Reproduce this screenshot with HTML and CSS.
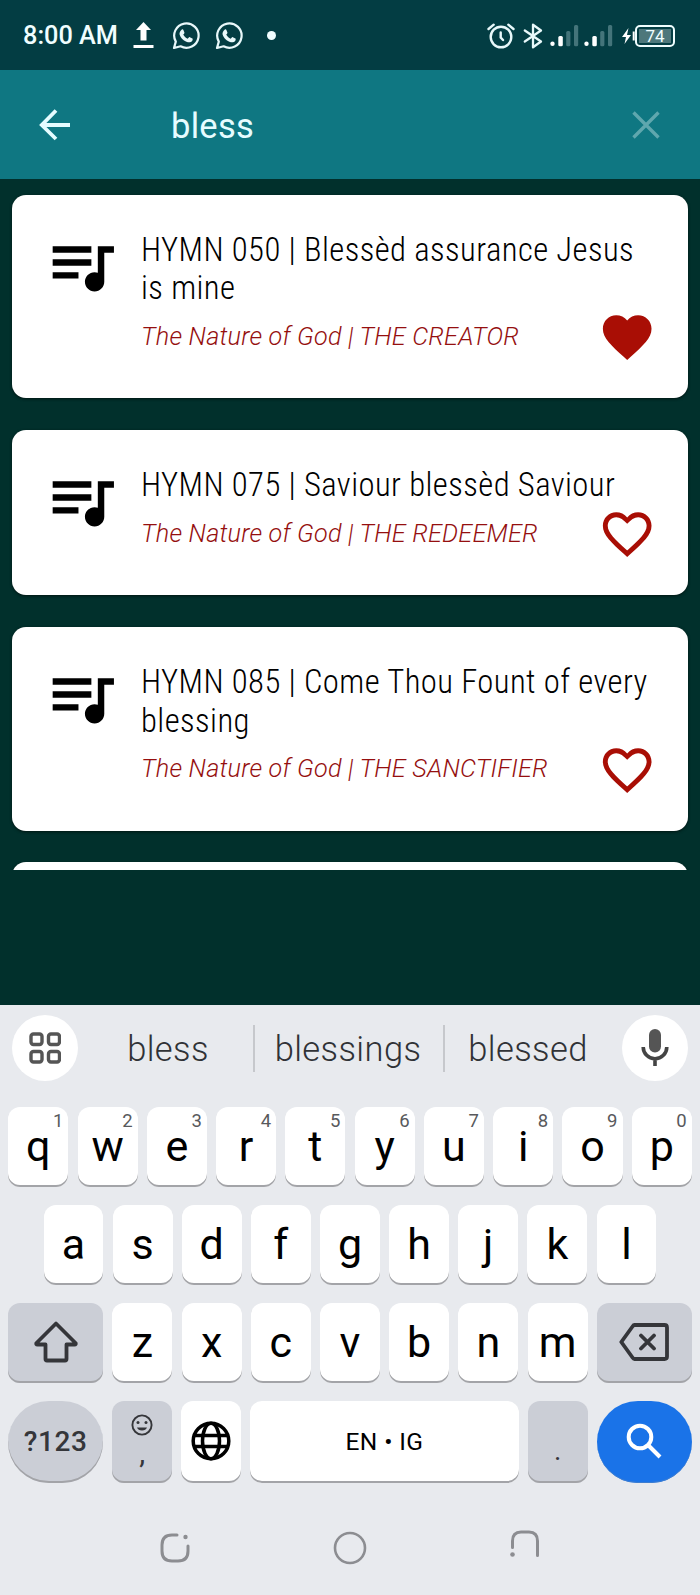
FILE: index.html
```
<!DOCTYPE html>
<html lang="en">
<head>
    <meta charset="utf-8">
    <title>Hymn Search</title>
    <link rel="stylesheet" href="styles.css">
</head>
<body>
    <!-- shared icons -->
    <svg class="defs">
        <symbol id="queue" viewBox="0 0 24 24"><path d="M15 6H3v2h12V6zm0 4H3v2h12v-2zM3 16h8v-2H3v2zM17 6v8.18c-.31-.11-.65-.18-1-.18-1.66 0-3 1.34-3 3s1.34 3 3 3 3-1.34 3-3V8h3V6h-5z"/></symbol>
        <symbol id="heart" viewBox="0 0 24 24"><path d="M12 21.35l-1.45-1.32C5.4 15.36 2 12.28 2 8.5 2 5.42 4.42 3 7.5 3c1.74 0 3.41.81 4.5 2.09C13.09 3.81 14.76 3 16.5 3 19.58 3 22 5.42 22 8.5c0 3.78-3.4 6.86-8.55 11.54L12 21.35z"/></symbol>
        <symbol id="heart-border" viewBox="0 0 24 24"><path d="M16.5 3c-1.74 0-3.41.81-4.5 2.09C10.91 3.81 9.24 3 7.5 3 4.42 3 2 5.42 2 8.5c0 3.78 3.4 6.86 8.55 11.54L12 21.35l1.45-1.32C18.6 15.36 22 12.28 22 8.5 22 5.42 19.58 3 16.5 3zm-4.4 15.55l-.1.1-.1-.1C7.14 14.24 4 11.39 4 8.5 4 6.5 5.5 5 7.5 5c1.54 0 3.04 1.14 4.5 2.7 1.46-1.56 2.96-2.7 4.5-2.7 2 0 3.5 1.5 3.5 3.5 0 2.89-3.14 5.74-7.9 10.05z"/></symbol>
        <symbol id="whatsapp" viewBox="0 0 28 28">
            <path d="M2 26l1.8-6.4A12.2 12.2 0 1 1 8.6 24.3z" fill="none" stroke="#e8f8fa" stroke-width="2.2" stroke-linejoin="round"/>
            <path d="M9.6 7.7c.6-.5 1.5-.5 1.8.2l1 2.5c.2.5 0 .9-1.2 2.2 1 2 2.4 3.3 4.5 4.2 1.3-1.5 1.6-1.9 2.1-1.6l2.6 1.3c.5.3.4 1.3-.1 2.2-.8 1.3-2.9 1.9-4.4 1.5-4.2-1.1-7.3-4-8.3-7.7-.4-1.8.6-3.6 2-4.8z" fill="#e8f8fa"/>
        </symbol>
        <symbol id="signal" viewBox="0 0 29 22">
            <circle cx="2.5" cy="18.8" r="2.2" fill="#fff"/>
            <rect x="8.3" y="11" width="4.5" height="10.2" rx="1.5" fill="#fff"/>
            <rect x="16.2" y="6" width="4.2" height="15.2" rx="1.5" fill="#44747a"/>
            <rect x="24" y="0" width="4.2" height="21.2" rx="1.5" fill="#44747a"/>
        </symbol>
    </svg>

    <div class="status-bar">
        <span class="time">8:00 AM</span>
        <svg class="upload" width="21" height="27" viewBox="0 0 21 27" fill="#fff"><path d="M10.5 0l7.5 8h-4.5v10.5h-6V8H3zM.5 23h20v3H.5z"/></svg>
        <svg class="chat" width="28" height="28"><use href="#whatsapp"/></svg>
        <svg class="chat" width="28" height="28"><use href="#whatsapp"/></svg>
        <span class="dot"></span>
        <div class="status-right">
            <svg width="28" height="26" viewBox="0 0 28 26" fill="none" stroke="#e8f8fa" stroke-width="2.4" stroke-linecap="round"><circle cx="14" cy="14" r="10.3"/><path d="M1.5 6l5.2-4.3M26.5 6l-5.2-4.3M13.7 9.5v5l2.3 2.5"/></svg>
            <svg class="bluetooth" width="20" height="26" viewBox="0 0 20 26" fill="none" stroke="#e8f8fa" stroke-width="2.3" stroke-linejoin="round" stroke-linecap="round"><path d="M1.8 7.5L18 18.5 10 24.3V1.7L18 7.5 1.8 18.5"/></svg>
            <svg class="signal" width="29" height="22"><use href="#signal"/></svg>
            <svg class="signal second" width="29" height="22"><use href="#signal"/></svg>
            <svg class="bolt" width="14" height="18" viewBox="0 0 14 18"><path d="M7.5 1L1 10h4L3.5 17 10 8H6z" fill="#fff"/><path d="M12.7 4.5v9" stroke="#fff" stroke-width="2"/></svg>
            <span class="battery"><span>74</span></span>
        </div>
    </div>

    <div class="toolbar">
        <svg class="back" width="32" height="32" viewBox="0 0 32 32" fill="none" stroke="#e6fcff" stroke-width="3.8"><path d="M31 16H3M17 1.5L2.8 16 17 30"/></svg>
        <span class="query">bless</span>
        <svg class="clear" width="28" height="28" viewBox="0 0 28 28" fill="none" stroke="#5fa7ae" stroke-width="3.4"><path d="M1.5 1.5l25 25M26.5 1.5l-25 25"/></svg>
    </div>

    <div class="results">
        <div class="card">
            <svg class="note"><use href="#queue"/></svg>
            <div class="info">
                <div class="title">HYMN 050 | Blessèd assurance Jesus<br>is mine</div>
                <div class="category">The Nature of God | THE CREATOR</div>
            </div>
            <svg class="fav"><use href="#heart"/></svg>
        </div>
        <div class="card">
            <svg class="note"><use href="#queue"/></svg>
            <div class="info">
                <div class="title">HYMN 075 | Saviour blessèd Saviour</div>
                <div class="category">The Nature of God | THE REDEEMER</div>
            </div>
            <svg class="fav"><use href="#heart-border"/></svg>
        </div>
        <div class="card">
            <svg class="note"><use href="#queue"/></svg>
            <div class="info">
                <div class="title">HYMN 085 | Come Thou Fount of every<br>blessing</div>
                <div class="category">The Nature of God | THE SANCTIFIER</div>
            </div>
            <svg class="fav"><use href="#heart-border"/></svg>
        </div>
        <div class="card"></div>
    </div>

    <div class="keyboard">
        <div class="suggestions">
            <span class="round"><svg width="32" height="32" viewBox="0 0 32 32" fill="none" stroke="#555" stroke-width="3.4"><rect x="2" y="2" width="11" height="10.5" rx="2.5"/><rect x="19.5" y="2" width="11" height="10.5" rx="2.5"/><rect x="2" y="19.5" width="11" height="10.5" rx="2.5"/><rect x="19.5" y="19.5" width="11" height="10.5" rx="2.5"/></svg></span>
            <span class="word first">bless</span>
            <span class="word middle">blessings</span>
            <span class="word last">blessed</span>
            <span class="round"><svg width="28" height="38" viewBox="0 0 28 38"><rect x="8" y="0" width="12" height="23.5" rx="6" fill="#555"/><path d="M2.2 18a11.8 11.8 0 0 0 23.6 0M14 30v7" fill="none" stroke="#444" stroke-width="3.6"/></svg></span>
        </div>

        <div class="row">
            <span class="key">q<sup>1</sup></span>
            <span class="key">w<sup>2</sup></span>
            <span class="key">e<sup>3</sup></span>
            <span class="key">r<sup>4</sup></span>
            <span class="key">t<sup>5</sup></span>
            <span class="key">y<sup>6</sup></span>
            <span class="key">u<sup>7</sup></span>
            <span class="key">i<sup>8</sup></span>
            <span class="key">o<sup>9</sup></span>
            <span class="key">p<sup>0</sup></span>
        </div>
        <div class="row indent">
            <span class="key">a</span>
            <span class="key">s</span>
            <span class="key">d</span>
            <span class="key">f</span>
            <span class="key">g</span>
            <span class="key">h</span>
            <span class="key">j</span>
            <span class="key">k</span>
            <span class="key">l</span>
        </div>
        <div class="row">
            <span class="key gray wide"><svg width="44" height="42" viewBox="0 0 44 42" fill="none" stroke="#35363a" stroke-width="3.8" stroke-linejoin="round"><path d="M22 2.5L2.5 22q-.8 1.5 1 1.5h8V38q0 1.5 1.5 1.5h18q1.5 0 1.5-1.5V23.5h8q1.8 0 1-1.5z"/></svg></span>
            <span class="key">z</span>
            <span class="key">x</span>
            <span class="key">c</span>
            <span class="key">v</span>
            <span class="key">b</span>
            <span class="key">n</span>
            <span class="key">m</span>
            <span class="key gray wide"><svg width="50" height="38" viewBox="0 0 50 38" fill="none" stroke="#35363a" stroke-width="3.8" stroke-linejoin="round" stroke-linecap="round"><path d="M15.5 2h30q2.5 0 2.5 2.5v29q0 2.500-2.500 2.500h-30q-1 0-2-1.500L2.300 19 13.500 3.500q1-1.500 2-1.500zM22 12.500l13 13M35 12.500l-13 13"/></svg></span>
        </div>
        <div class="row bottom">
            <span class="key gray wide oval symbols">?123</span>
            <span class="key gray comma">
                <svg width="22" height="22" viewBox="0 0 22 22" fill="none" stroke="#35363a" stroke-width="1.9"><circle cx="11" cy="11" r="9.6"/><path d="M6 13.500h10a5.200 4 0 0 1-10 0z" fill="#35363a" stroke="none"/><circle cx="7" cy="8.5" r="1.5" fill="#35363a" stroke="none"/><circle cx="15" cy="8.5" r="1.5" fill="#35363a" stroke="none"/></svg>
                <span>,</span>
            </span>
            <span class="key"><svg width="40" height="40" viewBox="0 0 40 40" fill="none" stroke="#000" stroke-width="3.5"><circle cx="20" cy="20" r="17.8"/><ellipse cx="20" cy="20" rx="8.5" ry="17.8"/><path d="M4 14.5h32M4 25.5h32"/></svg></span>
            <span class="key space">EN • IG</span>
            <span class="key gray period">.</span>
            <span class="key wide oval search"><svg width="36" height="36" viewBox="0 0 36 36" fill="none" stroke="#fff" stroke-width="4"><circle cx="14" cy="14" r="11.3"/><path d="M22 22l12 12"/></svg></span>
        </div>

        <div class="nav">
            <svg width="32" height="32" viewBox="0 0 32 32" fill="none" stroke="#8c8d91" stroke-width="3" stroke-linecap="round"><path d="M18 3h-5Q3 3 3 13v6q0 10 10 10h6q10 0 10-10v-5"/><circle cx="26.5" cy="5" r="2.2" fill="#8c8d91" stroke="none"/></svg>
            <svg width="34" height="34" viewBox="0 0 34 34" fill="none" stroke="#8c8d91" stroke-width="2.6"><circle cx="17" cy="17" r="15"/></svg>
            <svg class="recent" width="32" height="30" viewBox="0 0 32 30" fill="none" stroke="#8c8d91" stroke-width="3" stroke-linecap="round"><path d="M3.5 18.5V12Q3.5 3 12 3h8q8.5 0 8.5 9v14.5"/><circle cx="3.5" cy="25.5" r="2.3" fill="#8c8d91" stroke="none"/></svg>
        </div>
    </div>
</body>
</html>
```
FILE: styles.css
```
* {
    box-sizing: border-box;
}
body {
    margin: 0;
    width: 700px;
    height: 1595px;
    overflow: hidden;
    display: flex;
    flex-direction: column;
    font-family: Roboto, sans-serif;
    background-color: #01302c;
}
svg {
    display: block;
    flex: none;
}
.defs {
    width: 0;
    height: 0;
    position: absolute;
}
.status-bar {
    flex: none;
    height: 70px;
    padding: 1px 25px 0 23px;
    display: flex;
    align-items: center;
    background-color: #033d43;
    color: #f0feff;
}
.time {
    width: 110px;
    font-size: 25.3px;
    font-weight: 500;
    white-space: nowrap;
}
.chat {
    margin-left: 15px;
}
.upload + .chat {
    margin-left: 18px;
}
.dot {
    width: 9px;
    height: 9px;
    margin-left: 24px;
    border-radius: 50%;
    background-color: #f0feff;
}
.status-right {
    margin-left: auto;
    display: flex;
    align-items: center;
}
.bluetooth {
    margin-left: 8px;
}
.signal {
    margin-left: 7px;
}
.signal.second {
    margin-left: 5px;
}
.bolt {
    margin-left: 8px;
}
.battery {
    width: 40px;
    height: 22px;
    padding: 2px;
    border: 2px solid #f0feff;
    border-radius: 5px;
}
.battery span {
    display: block;
    height: 14px;
    background-color: #4d777b;
    font-size: 17px;
    line-height: 15px;
    text-align: center;
}
.toolbar {
    flex: none;
    height: 109px;
    padding: 2px 40px 0 39px;
    display: flex;
    align-items: center;
    background-color: #0f7782;
}
.toolbar svg {
    margin-bottom: 1px;
}
.query {
    flex: 1;
    padding-left: 100px;
    font-size: 34.5px;
    letter-spacing: 0.3px;
    color: #e6fcff;
}
.results {
    flex: none;
    height: 691px;
    padding: 15.7px 12px 0;
    display: flex;
    flex-direction: column;
    gap: 31.8px;
    overflow: hidden;
}
.card {
    flex: none;
    min-height: 165px;
    display: grid;
    grid-template-columns: 98px 1fr;
    padding: 0 31.5px 0 31px;
    border-radius: 14px;
    background-color: #fff;
    box-shadow: 0 1px 3px #001512;
}
.note {
    width: 77.4px;
    height: 77.4px;
    margin-top: 32px;
}
.info {
    grid-area: 1 / 2;
    padding: 36.3px 0 46.7px;
}
.title {
    font-family: "Roboto Condensed", Roboto, sans-serif;
    font-stretch: 75%;
    font-weight: 360;
    font-size: 32.7px;
    line-height: 38.4px;
    letter-spacing: 0.42px;
    white-space: nowrap;
    color: #000;
}
.category {
    margin-top: 15px;
    font-size: 25.2px;
    font-style: italic;
    font-weight: 350;
    line-height: 28.8px;
    letter-spacing: 0.22px;
    white-space: nowrap;
    color: #950f0f;
}
.fav {
    grid-area: 1 / 2;
    align-self: end;
    justify-self: end;
    width: 58.4px;
    height: 58.4px;
    margin-bottom: 31.5px;
    fill: #a90e05;
}
.keyboard {
    margin-top: 135px;
    flex: 1;
    padding-top: 10px;
    background-color: #e8eaee;
}
.suggestions {
    height: 66px;
    margin: 0 12px 26px;
    display: flex;
    align-items: center;
}
.round {
    width: 66px;
    height: 66px;
    border-radius: 50%;
    display: flex;
    align-items: center;
    justify-content: center;
    background-color: #fff;
}
.word {
    height: 47px;
    font-size: 34.5px;
    font-weight: 350;
    letter-spacing: 0.4px;
    line-height: 49px;
    text-align: center;
    color: #303236;
}
.word.first {
    width: 175px;
    padding-left: 5px;
}
.word.middle {
    width: 192px;
    padding-right: 2px;
    border-left: 2px solid #c6c8cc;
    border-right: 2px solid #c6c8cc;
}
.word.last {
    width: 177px;
    padding-right: 11px;
}
.row {
    height: 79.5px;
    margin-bottom: 18.5px;
    padding: 0 8.3px;
    display: flex;
    gap: 9.2px;
}
.row.indent {
    padding: 0 43.5px;
}
.row.bottom {
    height: 82px;
    margin-bottom: 0;
}
.key {
    flex: 1;
    position: relative;
    display: flex;
    align-items: center;
    justify-content: center;
    padding-bottom: 2px;
    border-radius: 12px;
    background-color: #fff;
    box-shadow: inset 0 -2px 0 #a3a4a8;
    font-size: 43px;
    color: #000;
}
.key sup {
    position: absolute;
    top: 4px;
    right: 5px;
    font-size: 18.5px;
    font-weight: 450;
    line-height: 20px;
    color: #58595c;
}
.gray {
    background-color: #cbced6;
    color: #35363a;
}
.wide {
    flex: none;
    width: 94.9px;
}
.oval {
    border-radius: 44px;
}
.symbols {
    font-size: 28px;
    font-weight: 480;
    letter-spacing: 0.6px;
}
.comma {
    flex-direction: column;
    justify-content: flex-start;
    padding-top: 13px;
    font-size: 30px;
}
.comma span {
    line-height: 34px;
}
.space {
    flex: none;
    width: 268.5px;
    font-size: 24.5px;
    font-weight: 380;
    letter-spacing: 0.4px;
}
.period {
    align-items: flex-end;
    padding-bottom: 16px;
    font-size: 28px;
}
.search {
    background-color: #1a73e8;
    box-shadow: inset 0 -1px 0 #3d7dd0;
}
.nav {
    padding: 46px 159px 0;
    display: flex;
    justify-content: space-between;
    align-items: center;
}
.recent {
    margin-bottom: 8px;
}
```
